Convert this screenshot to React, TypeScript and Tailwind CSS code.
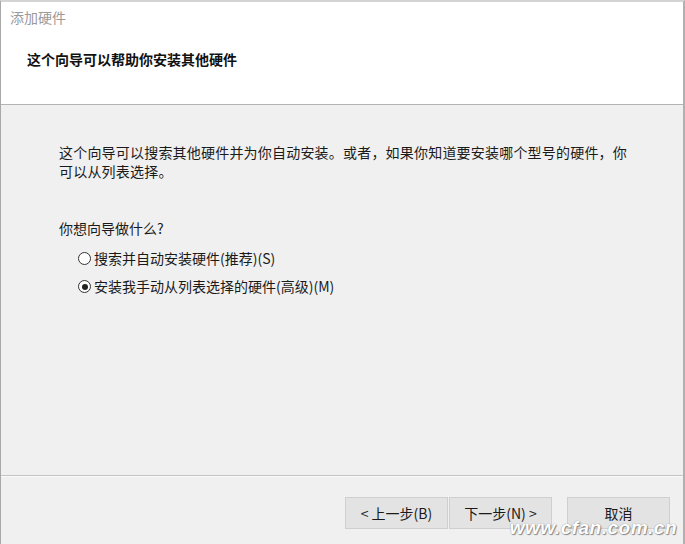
import React from "react";

function Radio({ checked }: { checked?: boolean }) {
  return (
    <span className="relative inline-flex h-[13px] w-[13px] shrink-0 items-center justify-center rounded-full border border-[#333333] bg-white">
      {checked && <span className="h-[6px] w-[6px] rounded-full bg-[#222222]" />}
    </span>
  );
}

function Btn({ children }: { children: React.ReactNode }) {
  return (
    <div className="flex h-[32px] w-[103px] items-center justify-center border border-[#cfcfcf] bg-[#e3e3e3] text-[14px] text-[#1a1a1a]">
      {children}
    </div>
  );
}

export default function App() {
  return (
    <div
      className="relative flex h-[544px] w-[685px] flex-col overflow-hidden border-t-2 border-l border-r-2 border-t-[#d4d4d4] border-l-[#a8a8a8] border-r-[#b0b0b0] bg-[#f0f0f0] text-[#1a1a1a]"
      style={{ fontFamily: '"Noto Sans CJK SC", "Noto Sans", sans-serif' }}
    >
      {/* header */}
      <div className="flex h-[103px] shrink-0 flex-col border-b border-[#b4b4b4] bg-white">
        <div className="pl-[9px] pt-[5px] text-[14px] leading-[20px] text-[#9a9a9a]">添加硬件</div>
        <div className="pl-[26px] pt-[22px] text-[14px] font-bold leading-[20px] text-[#111111]">
          这个向导可以帮助你安装其他硬件
        </div>
      </div>

      {/* body */}
      <div className="flex flex-1 flex-col pl-[58px] pt-[38px]">
        <p className="w-[574px] text-[14px] leading-[19px] tracking-[0.2px]">
          这个向导可以搜索其他硬件并为你自动安装。或者，如果你知道要安装哪个型号的硬件，你可以从列表选择。
        </p>
        <div className="mt-[38px] text-[14px] leading-[19px]">你想向导做什么?</div>
        <div className="mt-[11px] flex flex-col gap-[9px] pl-[19px]">
          <div className="flex items-center gap-[3px] text-[14px] leading-[19px]">
            <Radio />
            <span>搜索并自动安装硬件(推荐)(S)</span>
          </div>
          <div className="flex items-center gap-[3px] text-[14px] leading-[19px]">
            <Radio checked />
            <span>安装我手动从列表选择的硬件(高级)(M)</span>
          </div>
        </div>
      </div>

      {/* separator */}
      <div className="h-[1px] shrink-0 bg-[#c4c4c4]" />
      <div className="h-[1px] shrink-0 bg-[#fafafa]" />

      {/* buttons */}
      <div className="flex h-[67px] shrink-0 items-start pl-[344px] pt-[20px]">
        <div className="flex gap-[1px]">
          <Btn>&lt; 上一步(B)</Btn>
          <Btn>下一步(N) &gt;</Btn>
        </div>
        <div className="ml-[15px]">
          <Btn>取消</Btn>
        </div>
      </div>

      {/* watermark */}
      <div
        className="absolute bottom-[2px] right-[6px] text-[19px] font-bold italic tracking-[0.5px] text-white [text-shadow:0_0_1px_#777,1px_1px_1px_#888]"
        style={{ fontFamily: '"Liberation Sans", Arial, sans-serif' }}
      >
        www.cfan.com.cn
      </div>
    </div>
  );
}
